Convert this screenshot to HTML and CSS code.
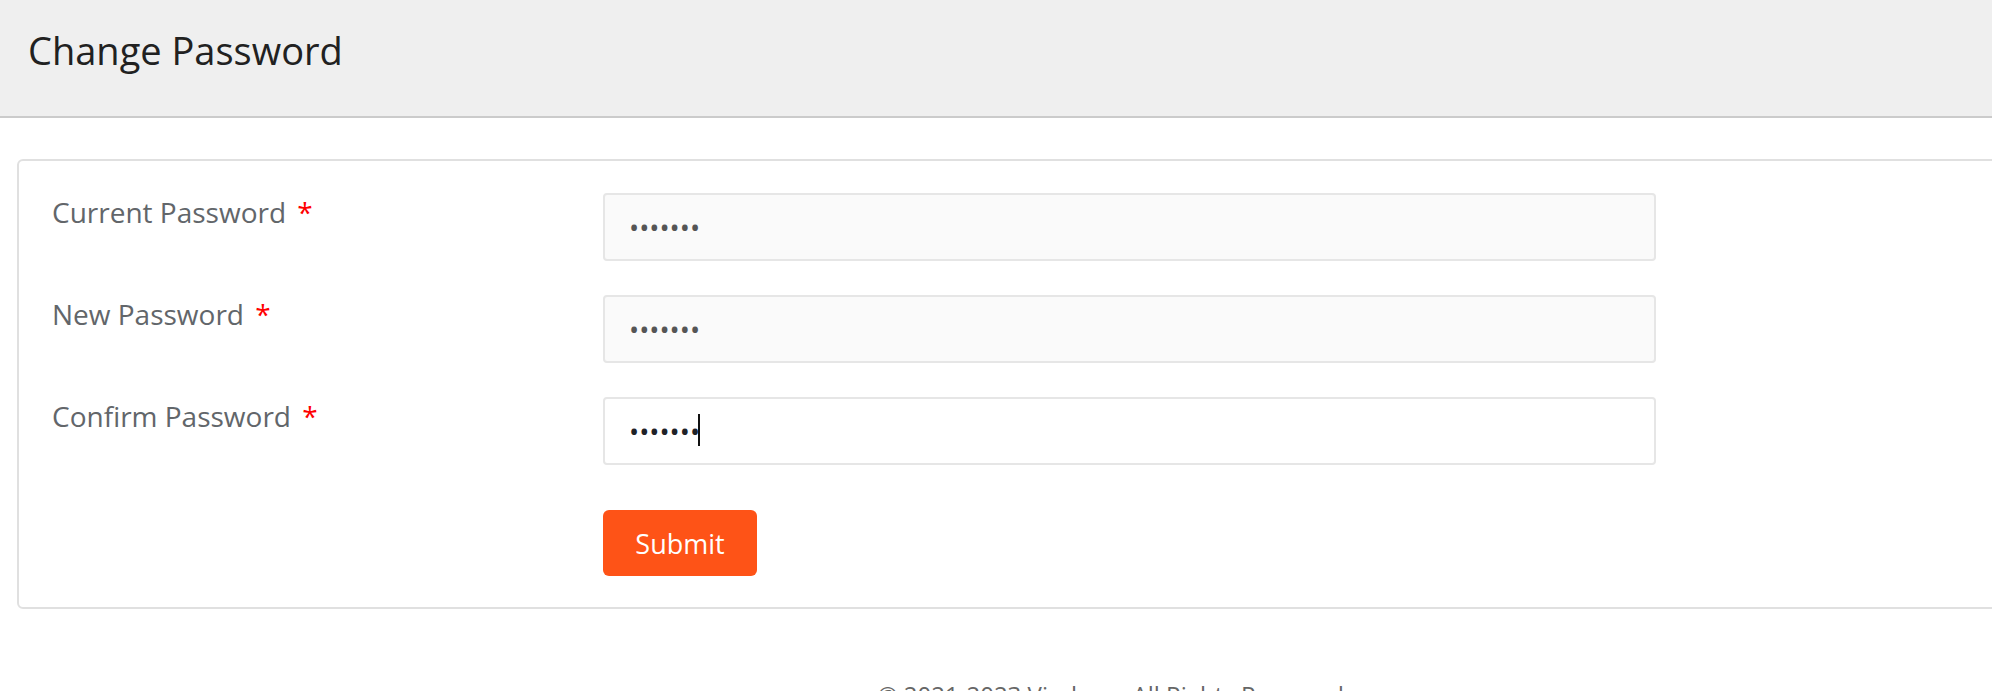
FILE: index.html
```html
<!DOCTYPE html>
<html lang="en">
<head>
    <meta charset="UTF-8">
    <meta name="viewport" content="width=device-width, initial-scale=1.0">
    <title>Change Password</title>
    <link rel="stylesheet" href="styles.css">
</head>
<body>

<div class="page">
    <header class="page-head">
        Change Password
    </header>

    <div class="card">
        <form class="pw-form" onsubmit="return false;">
            <div class="form-row">
                <label for="currentPw">Current Password <span class="req">*</span></label>
                <input type="password" id="currentPw" value="1234567">
            </div>
            <div class="form-row">
                <label for="newPw">New Password <span class="req">*</span></label>
                <input type="password" id="newPw" value="1234567">
            </div>
            <div class="form-row">
                <label for="confirmPw">Confirm Password <span class="req">*</span></label>
                <div class="input-wrap">
                    <input type="password" id="confirmPw" class="active" value="1234567">
                    <span class="caret"></span>
                </div>
            </div>
            <div class="form-row actions">
                <div></div>
                <div>
                    <button type="submit" class="btn-submit">Submit</button>
                </div>
            </div>
        </form>
    </div>

    <footer class="page-foot">
        &copy; 2021-2023 Viralpep. All Rights Reserved.
    </footer>
</div>

</body>
</html>
```

FILE: styles.css
```css
html, body {
    margin: 0;
    padding: 0;
    overflow: hidden;
}
body {
    font-family: "Open Sans", "Noto Sans", sans-serif;
    background-color: #fff;
    color: #212121;
}
.page {
    width: 2228px;
}
.page-head {
    background-color: #efefef;
    border-bottom: 2px solid #cbcbcb;
    padding: 24px 28px 40px;
    font-size: 38px;
    line-height: 52px;
    color: #212121;
}
.card {
    margin: 41px 17px 0;
    border: 2px solid #e0e0e0;
    border-radius: 6px;
    padding: 32px 33px 31px;
}
.form-row {
    display: grid;
    grid-template-columns: 551px 1053px;
    margin-bottom: 34px;
}
.form-row:nth-child(3) {
    margin-bottom: 45px;
}
.form-row.actions {
    margin-bottom: 0;
}
.form-row label {
    font-size: 28px;
    line-height: 38px;
    color: #62666a;
}
.req {
    color: #ff0000;
    margin-left: 4px;
}
.form-row input {
    box-sizing: border-box;
    height: 68px;
    width: 100%;
    border: 2px solid #e6e6e6;
    border-radius: 4px;
    background-color: #fafafa;
    padding: 0 24px;
    font-family: "Open Sans", sans-serif;
    font-size: 27px;
    color: #555;
    outline: none;
}
.form-row input.active {
    background-color: #fff;
    color: #1f2227;
}
.input-wrap {
    position: relative;
}
.caret {
    position: absolute;
    left: 95px;
    top: 17px;
    width: 2px;
    height: 32px;
    background-color: #111;
}
.btn-submit {
    width: 154px;
    height: 66px;
    border: none;
    border-radius: 6px;
    background-color: #fe5317;
    color: #fff;
    font-family: "Open Sans", sans-serif;
    font-size: 27px;
    cursor: pointer;
}
.btn-submit:hover {
    background-color: #e84a10;
}
.page-foot {
    margin-top: 70px;
    text-align: center;
    font-size: 24px;
    line-height: 32px;
    color: #666;
}
```
